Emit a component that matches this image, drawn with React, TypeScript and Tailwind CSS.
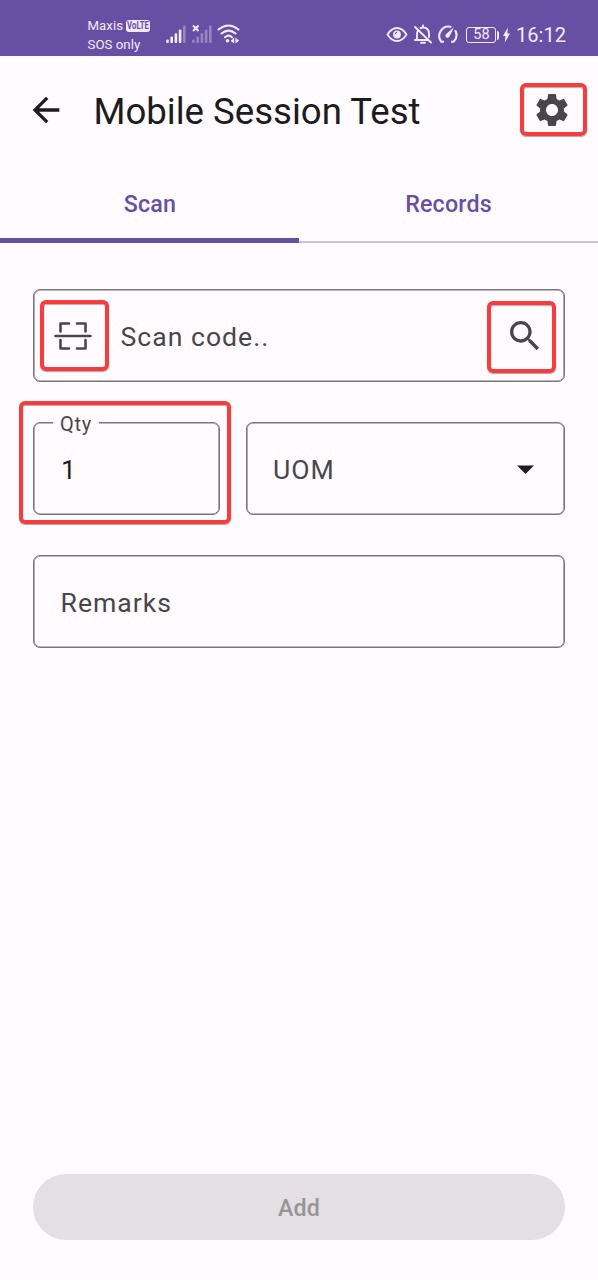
import React from "react";

const highlight =
  "pointer-events-none absolute rounded-[6px] border-4 border-[#f63c3d] shadow-[0_1px_1px_rgba(60,60,60,0.45),inset_0_1px_1px_rgba(60,60,60,0.4)]";
const field =
  "relative flex h-[93px] items-center rounded-[7px] border border-[#79747e] shadow-[inset_0_0_0_0.6px_#79747e]";
const label = "text-[26.6px] leading-8 tracking-[1px] text-[#49454f]";

function SignalBars({ muted = false }: { muted?: boolean }) {
  return (
    <svg className="h-6 w-5 shrink-0" viewBox="0 0 20 24" fill="#f3e9ff">
      <g fillOpacity={muted ? 0.35 : 1}>
        <rect x="0.2" y="19.5" width="2.6" height="3.5" rx="1" />
        <rect x="4.4" y="16.5" width="2.6" height="6.5" rx="1" />
        <rect x="8.6" y="13.3" width="2.6" height="9.7" rx="1" />
        <rect x="12.8" y="9.5" width="2.6" height="13.5" rx="1" />
        <rect x="17" y="5.5" width="2.6" height="17.5" rx="1" fillOpacity={0.35} />
      </g>
      {muted && <path d="m1 5.500 5.500 5.500m0-5.500-5.500 5.500" stroke="#f3e9ff" strokeWidth="2" />}
    </svg>
  );
}

function StatusBar() {
  return (
    <header className="flex h-14 items-start bg-[#6750a4] pl-[87.5px] pr-8 text-[#f3e9ff]">
      <div className="w-[78.5px] pt-[17px] text-[13.3px] leading-[18.5px]">
        <div className="flex items-center gap-[3px]">
          <span>Maxis</span>
          <span className="flex h-3 w-6 items-center justify-center rounded-[3px] bg-[#f3e9ff]">
            <span className="scale-x-[0.78] text-[10px] font-bold leading-none text-[#6750a4]">VoLTE</span>
          </span>
        </div>
        <div className="whitespace-nowrap">SOS only</div>
      </div>
      <div className="flex pt-5">
        <SignalBars />
        <div className="w-[6px]" />
        <SignalBars muted />
        <svg className="ml-[5px] h-6 w-6" viewBox="0 0 24 24" fill="none" stroke="#f3e9ff" strokeWidth="2.1" strokeLinecap="round">
          <path d="M1.5 9.5Q11.5 1.5 21.5 9.5M4.5 13.5q7-5.8 14 0M8 17.2q3.5-3 7 0" />
          <circle cx="10.500" cy="20.800" r="1.800" fill="#f3e9ff" stroke="none" />
          <path d="m17.200 17.500-3.500 3.500 3.500 2.500ZM18.500 17.500v6l3.500-2.800Z" fill="#f3e9ff" stroke="none" />
        </svg>
      </div>
      <div className="ml-auto flex items-center pt-[23px]">
        <svg className="h-6 w-[22px]" viewBox="0 0 22 24" fill="none" stroke="#f3e9ff" strokeWidth="1.8">
          <path d="M1.5 11.5Q5.5 5 11 5t9.500 6.500Q16.500 18 11 18t-9.500-6.500Z" />
          <circle cx="11" cy="11.500" r="3.900" fill="#f3e9ff" stroke="none" />
          <path d="M9.200 11.200q0-2 2-2" stroke="#6750a4" strokeWidth="1" />
        </svg>
        <svg className="ml-[6px] h-6 w-[18px]" viewBox="0 0 18 24" fill="none" stroke="#f3e9ff" strokeWidth="1.9">
          <path d="m1 4 16 15.500M1 17h12.500M3 17V11q0-2 1-3.500M6.500 5.200Q8 4.500 9 4.500q6 0 6 6.500v3M9 2.500v2M7 19.800h4" strokeLinecap="round" />
        </svg>
        <svg className="ml-[5px] h-6 w-[21px]" viewBox="0 0 21 24" fill="none" stroke="#f3e9ff" strokeWidth="2.1">
          <path d="M13.500 3.800A9.300 9.300 0 0 0 4 18.300M18.500 8a9.300 9.300 0 0 1-1.500 10.300" strokeLinecap="round" />
          <path d="M4 18.700h3M14 18.700h3" strokeWidth="1.900" />
          <path d="M17 4.300 12.700 13a2.200 2.200 0 1 1-2.900-2.500Z" fill="#f3e9ff" stroke="none" />
        </svg>
        <div className="ml-2 flex h-4 w-[30px] items-center justify-center rounded-[3px] border border-[#f3e9ff] text-[14.500px] leading-none">
          58
        </div>
        <div className="ml-[1px] h-[9px] w-[2px] rounded-r bg-[#f3e9ff]" />
        <svg className="ml-[4px] h-4 w-[7px]" viewBox="0 0 7 16" fill="#f3e9ff">
          <path d="M4.800.500 0 8.900h2.400L1.800 15.500 7 6.500H4.400Z" />
        </svg>
        <span className="ml-[5.500px] text-[20.100px] leading-6">16:12</span>
      </div>
    </header>
  );
}

export default function App() {
  return (
    <div className="flex h-[1280px] w-[598px] flex-col overflow-hidden bg-[#fffbfe] font-['Roboto',sans-serif] text-[#1c1b1f]">
      <StatusBar />
      <div className="flex h-[107px] items-center pl-[26px] pr-[26px]">
        <svg className="h-10 w-10" viewBox="0 0 24 24" fill="currentColor">
          <path d="M20 11H7.830l5.590-5.590L12 4l-8 8 8 8 1.410-1.410L7.830 13H20v-2z" />
        </svg>
        <h1 className="ml-[27.500px] pt-[5px] text-[36.600px] font-normal leading-[46px]">Mobile Session Test</h1>
        <button className="relative ml-auto h-10 w-10 text-[#49454f]">
          <svg className="h-10 w-10" viewBox="0 0 24 24" fill="currentColor">
            <path d="M19.140 12.940c.04-.3.06-.61.06-.94 0-.32-.02-.64-.07-.94l2.030-1.580c.18-.14.23-.41.12-.61l-1.920-3.320c-.12-.22-.37-.29-.59-.22l-2.390.96c-.5-.38-1.030-.7-1.620-.94l-.36-2.540c-.04-.24-.24-.41-.48-.41h-3.840c-.24 0-.43.17-.47.41l-.36 2.540c-.59.24-1.130.57-1.620.94l-2.390-.96c-.22-.08-.47 0-.59.22L2.740 8.870c-.12.21-.08.47.12.61l2.030 1.580c-.05.3-.09.63-.09.94s.02.64.07.94l-2.030 1.580c-.18.14-.23.41-.12.61l1.920 3.320c.12.22.37.29.59.22l2.390-.96c.5.38 1.030.7 1.620.94l.36 2.540c.05.24.24.41.48.41h3.840c.24 0 .44-.17.47-.41l.36-2.540c.59-.24 1.130-.56 1.620-.94l2.390.96c.22.08.47 0 .59-.22l1.920-3.320c.12-.22.07-.47-.12-.61l-2.010-1.580zM12 15.600c-1.980 0-3.600-1.620-3.600-3.600s1.620-3.600 3.600-3.600 3.600 1.620 3.600 3.600-1.620 3.600-3.600 3.600z" />
          </svg>
          <span className={`${highlight} -left-3 -top-[7px] h-[53px] w-[67px]`} />
        </button>
      </div>
      <nav className="flex h-20 text-[23.250px] font-medium leading-[33px] tracking-[0.17px] text-[#6750a4]">
        <div className="flex w-[299px] justify-center border-b-[5px] border-[#6750a4] pl-[1px] pt-[25px]">Scan</div>
        <div className="flex w-[299px] justify-center border-b-2 border-[#cac4d0] pt-[25px]">Records</div>
      </nav>
      <main className="flex flex-1 flex-col gap-10 px-[33px] pb-10 pt-[46px]">
        <div className={field}>
          <svg className="ml-5 h-[30px] w-[38px] text-[#49454f]" viewBox="0 0 38 30" fill="none" stroke="currentColor" strokeWidth="2.600" strokeLinejoin="round">
            <path d="M6.500 10.500V2.500h8.500M23 2.500h8.500v8M6.500 19v8.500h8.500M23 27.500h8.500V19M1.500 15h35" strokeLinecap="round" />
          </svg>
          <span className={`${label} ml-[28.500px] pt-[2px]`}>Scan code..</span>
          <svg className="ml-auto mr-[19px] h-10 w-10 text-[#49454f]" viewBox="0 0 24 24" fill="currentColor">
            <path d="M15.500 14h-.79l-.28-.27C15.410 12.590 16 11.110 16 9.500 16 5.910 13.090 3 9.500 3S3 5.910 3 9.500 5.910 16 9.500 16c1.610 0 3.090-.59 4.230-1.570l.27.28v.79l5 4.990L20.490 19l-4.990-5zm-6 0C7.010 14 5 11.990 5 9.500S7.010 5 9.500 5 14 7.010 14 9.500 11.990 14 9.500 14z" />
          </svg>
          <span className={`${highlight} left-[6px] top-[10px] h-[71px] w-[69px]`} />
          <span className={`${highlight} right-2 top-[11px] h-[72px] w-[69px]`} />
        </div>
        <div className="flex gap-[26px]">
          <div className={`${field} w-[187px]`}>
            <span className="absolute -top-[13px] left-[19px] bg-[#fffbfe] px-[7px] text-[20px] leading-7 tracking-[0.700px] text-[#49454f]">Qty</span>
            <span className="ml-[27px] pt-[2px] text-[26.600px] leading-8">1</span>
            <span className={`${highlight} -left-[15px] -top-[22px] h-[123px] w-[212px]`} />
          </div>
          <div className={`${field} flex-1`}>
            <span className={`${label} ml-[26px] pt-[2px]`}>UOM</span>
            <svg className="ml-auto mr-[30px] mt-[1px] h-[9px] w-[17px]" viewBox="0 0 17 9" fill="currentColor">
              <path d="M0 .5h17L8.500 9Z" />
            </svg>
          </div>
        </div>
        <div className={field}>
          <span className={`${label} ml-[26.500px] pt-[2px]`}>Remarks</span>
        </div>
        <button className="mt-auto h-[66px] rounded-full bg-[#e3dfe2] pt-[3px] text-[23.250px] font-medium tracking-[0.170px] text-[#979498]">
          Add
        </button>
      </main>
    </div>
  );
}
